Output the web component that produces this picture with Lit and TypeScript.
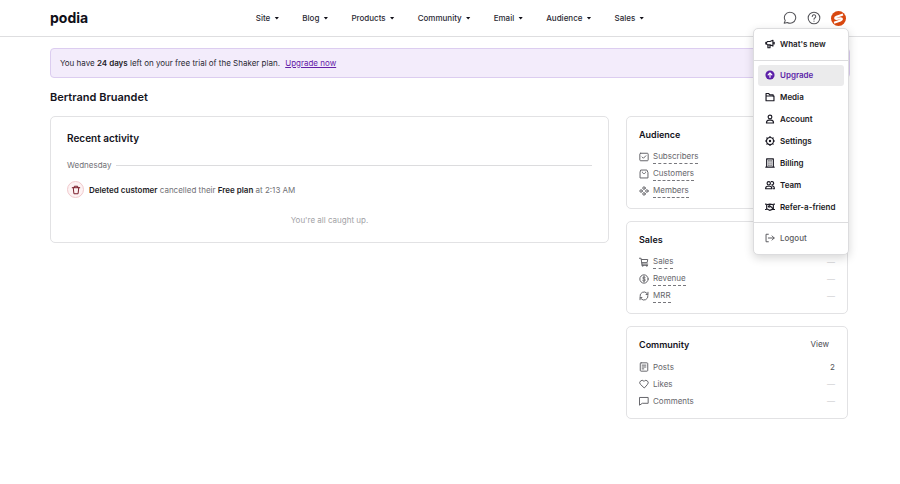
import { LitElement, html, svg, css, nothing, SVGTemplateResult } from "lit";
import { customElement, property } from "lit/decorators.js";
import { classMap } from "lit/directives/class-map.js";

const icons: Record<string, SVGTemplateResult> = {
  chat: svg`<path d="M12.500 2a9.500 9.500 0 1 1-5 17.700L2 21l1.800-4.600A9.500 9.500 0 0 1 12.500 2z"/>`,
  help: svg`<circle cx="12" cy="12" r="10"/><path d="M9 9.400a3 3 0 1 1 4.400 2.600c-.9.5-1.400 1-1.400 2.100M12 17v.6"/>`,
  megaphone: svg`<path d="M19 3v14l-7-3H6a4.500 4.500 0 0 1 0-8h6l7-3zM7 14v7h5v-6M22 8v4M2 8v4"/>`,
  upgrade: svg`<circle cx="12" cy="12" r="11" fill="currentColor" stroke="none"/><path stroke="#fff" d="M12 17.500V7M7.500 11.500 12 7l4.500 4.500"/>`,
  folder: svg`<path d="M2.500 9V3.500h6L11 6.500h8.500V10M2.500 9.500h19V21h-19z"/>`,
  person: svg`<circle cx="12" cy="7" r="4.500"/><path d="M3.500 21.500c0-5 3-7 6-7h5c3 0 6 2 6 7z"/>`,
  gear: svg`<circle cx="12" cy="12" r="8.500"/><circle cx="12" cy="12" r="1.500" fill="currentColor"/><path d="M12 1v2M12 21v2M1 12h2M21 12h2M4.500 4.500l1 1M18.500 18.500l1 1M4.500 19.500l1-1M18.500 5.500l1-1"/>`,
  billing: svg`<path d="M4 2h16v20H4zM2 22h20M9 7h1M9 12h1M9 17h1M14 7h1M14 12h1M14 17h1"/>`,
  team: svg`<circle cx="9" cy="8" r="4"/><path d="M1.500 21c0-4 2-6 5-6h5c3 0 5 2 5 6zM15.500 4a4 4 0 1 1 1 7.800M18 14.500c3 .3 4.500 2.500 4.500 6.500H20"/>`,
  handshake: svg`<path d="M1 5l5 1 6-1 6 1 5-1M1 18l4-1 6 3 8-3 4 1M4 6v11M20 6v11M12 6 8 11c2 2 4 1 5-1l6 6"/>`,
  logout: svg`<path d="M8 3H2.500v18H8M8 12h14M17 7l5 5-5 5"/>`,
  check: svg`<rect x="2" y="3" width="20" height="18" rx="2"/><path d="m7.500 12 3 3 6-6"/>`,
  bag: svg`<path d="M5 2.500h14l2.500 6V21.500h-19V8.500zM8 7.500c0 5 8 5 8 0"/>`,
  members: svg`<circle cx="12" cy="5" r="3"/><circle cx="5" cy="12" r="3"/><circle cx="19" cy="12" r="3"/><circle cx="12" cy="19" r="3"/>`,
  cart: svg`<path d="M1 3h4l2 14h14M5.500 6H21l-1.500 7.500H6.500M7 17v3h13"/><circle cx="8.500" cy="21" r="1.200"/><circle cx="18.500" cy="21" r="1.200"/>`,
  dollar: svg`<circle cx="12" cy="12" r="10"/><path d="M15 9c-.5-1.300-1.600-1.800-3-1.800-1.700 0-3 .8-3 2.300 0 3.300 6.200 1.700 6.200 5 0 1.500-1.400 2.400-3.200 2.400-1.500 0-2.800-.6-3.300-2M12 5v14"/>`,
  cycle: svg`<path d="M2.500 13A9.500 9.500 0 0 1 19 5.500l2 2.500M21.500 11A9.500 9.500 0 0 1 5 18.500L3 16M21.500 3v5.500H17M2.500 21v-5.500H7"/>`,
  post: svg`<rect x="3" y="2" width="18" height="20" rx="2"/><path d="M7.500 7.500h9M7.500 12h9M7.500 16.500h4"/>`,
  heart: svg`<path d="M12 21 3.500 13a5.600 5.600 0 0 1 0-8 5.600 5.600 0 0 1 8 0l.5.500.5-.5a5.600 5.600 0 0 1 8 8z"/>`,
  comment: svg`<path d="M2 3.500h20v14H8L2 21.500z"/>`,
  trash: svg`<path d="M3 6.500h18M8 6V3h8v3M5.500 7 7 21h10l1.500-14"/>`,
};

@customElement("ui-icon")
class UiIcon extends LitElement {
  @property() name = "";
  static styles = css`
    :host {
      display: block;
      flex: none;
      width: 10px;
      height: 10px;
    }
    .glyph {
      display: block;
      width: 100%;
      height: 100%;
      fill: none;
      stroke: currentColor;
      stroke-width: var(--icon-stroke, 2.4);
      stroke-linejoin: round;
      stroke-linecap: round;
    }
  `;
  render() {
    return html`<svg class="glyph" viewBox="0 0 24 24" aria-hidden="true">${icons[this.name]}</svg>`;
  }
}

interface Stat {
  icon: string;
  label: string;
  value?: string;
}

@customElement("stat-card")
class StatCard extends LitElement {
  @property() heading = "";
  @property({ type: Boolean }) hints = false;
  @property({ type: Boolean }) viewable = false;
  @property({ attribute: false }) stats: Stat[] = [];
  static styles = css`
    :host {
      display: block;
      border: 1px solid #e2e2e4;
      border-radius: 5px;
      padding: 9px 12px;
    }
    .head {
      display: flex;
      align-items: center;
      justify-content: space-between;
      line-height: 17px;
      margin-bottom: 5px;
    }
    .title {
      margin: 0;
      font-size: 9px;
      font-weight: 600;
      color: #14131c;
    }
    .view {
      color: #4a4a50;
      text-decoration: none;
      margin-right: 6px;
    }
    .list {
      margin: 0;
    }
    .row {
      display: flex;
      justify-content: space-between;
      align-items: center;
      height: 17px;
    }
    .name {
      display: flex;
      align-items: center;
      gap: 4px;
      color: #66666b;
    }
    .hint {
      line-height: 13px;
      border-bottom: 1px dashed #77777c;
    }
    .value {
      margin: 0;
      color: #55555a;
    }
    .empty {
      color: #cfcfd2;
    }
  `;
  render() {
    return html`
      <div class="head">
        <h2 class="title">${this.heading}</h2>
        ${this.viewable ? html`<a class="view" href="#community">View</a>` : nothing}
      </div>
      <dl class="list">
        ${this.stats.map(
          (s) => html`<div class="row">
            <dt class="name">
              <ui-icon name=${s.icon}></ui-icon>
              <span class=${classMap({ hint: this.hints })}>${s.label}</span>
            </dt>
            <dd class=${classMap({ value: true, empty: !s.value })}>${s.value ?? "—"}</dd>
          </div>`
        )}
      </dl>
    `;
  }
}

@customElement("account-menu")
class AccountMenu extends LitElement {
  static styles = css`
    :host {
      display: block;
      width: 94px;
      background: #fff;
      border: 1px solid #dcdcde;
      border-radius: 5px;
      box-shadow: 0 3px 10px rgba(0, 0, 0, 0.16);
      --icon-stroke: 2.8;
    }
    .group {
      display: grid;
      padding: 4px;
    }
    .group + .group {
      border-top: 1px solid #dcdcde;
    }
    .edge {
      height: 23px;
    }
    .main {
      height: 153px;
      grid-auto-rows: 1fr;
    }
    .item {
      display: flex;
      align-items: center;
      gap: 5px;
      padding: 0 7px;
      border-radius: 3px;
      color: #1b1a24;
      font-weight: 600;
      text-decoration: none;
      white-space: nowrap;
    }
    .active {
      background: #ebebec;
      color: #5b1fa8;
    }
    .quiet {
      color: #5c5c61;
      font-weight: 500;
      --icon-stroke: 2.4;
    }
  `;
  private items = [
    ["upgrade", "Upgrade"],
    ["folder", "Media"],
    ["person", "Account"],
    ["gear", "Settings"],
    ["billing", "Billing"],
    ["team", "Team"],
    ["handshake", "Refer-a-friend"],
  ];
  render() {
    return html`
      <div class="group edge">
        <a class="item" href="#new"><ui-icon name="megaphone"></ui-icon>What's new</a>
      </div>
      <div class="group main">
        ${this.items.map(
          ([icon, label]) => html`<a
            class=${classMap({ item: true, active: icon === "upgrade" })}
            href="#${icon}"
            ><ui-icon name=${icon}></ui-icon>${label}</a
          >`
        )}
      </div>
      <div class="group edge">
        <a class="item quiet" href="#logout"><ui-icon name="logout"></ui-icon>Logout</a>
      </div>
    `;
  }
}

@customElement("app-root")
class AppRoot extends LitElement {
  static styles = css`
    :host {
      display: block;
      min-height: 100vh;
      background: #fff;
      font: 400 8px/12px Inter, "Liberation Sans", sans-serif;
      color: #2a2933;
    }
    .topbar {
      display: grid;
      grid-template-columns: 1fr auto 1fr;
      align-items: center;
      height: 36px;
      padding: 0 50px;
      border-bottom: 1px solid #dedee0;
    }
    .logo {
      color: #100f18;
      font-size: 14px;
      line-height: 18px;
      font-weight: 700;
      text-decoration: none;
    }
    .nav {
      display: flex;
      gap: 23px;
    }
    .plain {
      display: flex;
      align-items: center;
      padding: 0;
      border: 0;
      background: none;
      font: inherit;
      color: inherit;
      cursor: pointer;
    }
    .navitem {
      gap: 4px;
      font-weight: 500;
    }
    .caret {
      width: 5px;
      height: 3px;
      background: #100f18;
      clip-path: polygon(0 0, 100% 0, 50% 100%);
    }
    .tools {
      display: flex;
      justify-content: flex-end;
      align-items: center;
      gap: 10px;
      position: relative;
      padding-right: 4px;
      color: #55555a;
    }
    .tool {
      width: 14px;
      height: 14px;
      --icon-stroke: 1.8;
    }
    .avatar {
      width: 15px;
      height: 15px;
      display: block;
    }
    .menu {
      position: absolute;
      top: 17px;
      right: 1px;
      z-index: 1;
    }
    .page {
      padding: 11px 50px 24px;
    }
    .banner {
      border: 1px solid #dccdf0;
      border-radius: 4px;
      background: #f3ecfb;
      padding: 8px 9px;
    }
    .upgrade {
      color: #6420a8;
      margin-left: 3px;
    }
    .strong {
      font-weight: 600;
      color: #1e1d27;
    }
    .owner {
      margin: 11px 0;
      font-size: 11px;
      line-height: 16px;
      font-weight: 600;
      color: #14131c;
    }
    .columns {
      display: grid;
      grid-template-columns: minmax(0, 1fr) 222px;
      align-items: start;
      gap: 17px;
      padding-right: 2px;
    }
    .side {
      display: grid;
      gap: 12px;
    }
    .activity {
      border: 1px solid #e2e2e4;
      border-radius: 5px;
      padding: 13px 16px 16px;
    }
    .title {
      margin: 0;
      font-size: 10px;
      line-height: 16px;
      font-weight: 600;
      color: #14131c;
    }
    .day {
      display: flex;
      align-items: center;
      gap: 5px;
      margin: 13px 0 10px;
      color: #717176;
    }
    .rule {
      flex: 1;
      height: 1px;
      background: #dcdcde;
    }
    .event {
      display: flex;
      align-items: center;
      gap: 5px;
      color: #717176;
    }
    .badge {
      display: grid;
      place-items: center;
      width: 15px;
      height: 15px;
      border: 1px solid #f1c9cc;
      border-radius: 50%;
      background: #fdf2f3;
      color: #7c1f2c;
    }
    .done {
      margin: 16px 0 0;
      text-align: center;
      color: #a2a2a6;
    }
  `;

  private sections = ["Site", "Blog", "Products", "Community", "Email", "Audience", "Sales"];

  render() {
    return html`
      <header class="topbar">
        <a class="logo" href="#home">podia</a>
        <nav class="nav">
          ${this.sections.map(
            (s) => html`<button class="plain navitem">${s}<span class="caret"></span></button>`
          )}
        </nav>
        <div class="tools">
          <button class="plain" aria-label="Messages"><ui-icon class="tool" name="chat"></ui-icon></button>
          <button class="plain" aria-label="Help"><ui-icon class="tool" name="help"></ui-icon></button>
          <button class="plain" aria-label="Account menu" aria-expanded="true">
            <svg class="avatar" viewBox="0 0 30 30" aria-hidden="true">
              <circle cx="15" cy="15" r="15" fill="#d9480f" />
              <path
                d="M24 7 11 11.500c-4 1.500-3.500 4.500 0 4.500l8-1.500c4 0 4 3 0 4.500L6 23.500"
                fill="none"
                stroke="#fff"
                stroke-width="4"
                stroke-linejoin="round"
              />
            </svg>
          </button>
          <account-menu class="menu"></account-menu>
        </div>
      </header>
      <main class="page">
        <div class="banner">
          You have <b class="strong">24 days</b> left on your free trial of the Shaker plan.
          <a class="upgrade" href="#upgrade">Upgrade now</a>
        </div>
        <h1 class="owner">Bertrand Bruandet</h1>
        <div class="columns">
          <section class="activity">
            <h2 class="title">Recent activity</h2>
            <div class="day">Wednesday<span class="rule"></span></div>
            <div class="event">
              <span class="badge"><ui-icon name="trash"></ui-icon></span>
              <span
                ><b class="strong">Deleted customer</b> cancelled their
                <b class="strong">Free plan</b> at 2:13 AM</span
              >
            </div>
            <p class="done">You're all caught up.</p>
          </section>
          <aside class="side">
            <stat-card
              heading="Audience"
              hints
              .stats=${[
                { icon: "check", label: "Subscribers" },
                { icon: "bag", label: "Customers" },
                { icon: "members", label: "Members" },
              ]}
            ></stat-card>
            <stat-card
              heading="Sales"
              hints
              .stats=${[
                { icon: "cart", label: "Sales" },
                { icon: "dollar", label: "Revenue" },
                { icon: "cycle", label: "MRR" },
              ]}
            ></stat-card>
            <stat-card
              heading="Community"
              viewable
              .stats=${[
                { icon: "post", label: "Posts", value: "2" },
                { icon: "heart", label: "Likes" },
                { icon: "comment", label: "Comments" },
              ]}
            ></stat-card>
          </aside>
        </div>
      </main>
    `;
  }
}
